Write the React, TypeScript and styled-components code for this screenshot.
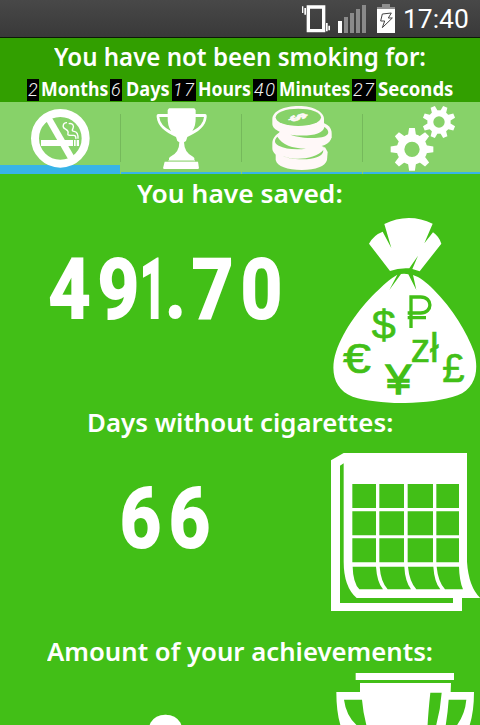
import React, { useLayoutEffect, useRef, useState } from 'react';
import styled, { createGlobalStyle } from 'styled-components';

const GREEN = '#42bf17';
const TAB_GREEN = '#87d269';

const GlobalStyle = createGlobalStyle`
  *, *::before, *::after { box-sizing: border-box; }
  body { margin: 0; overflow: hidden; background: ${GREEN}; }
`;

const Screen = styled.main`
  display: flex;
  flex-direction: column;
  width: 480px;
  height: 725px;
  overflow: hidden;
  background: ${GREEN};
  color: #fff;
  font-family: 'Noto Sans', 'Open Sans', sans-serif;
`;

const StatusBar = styled.div`
  flex: none;
  display: flex;
  justify-content: flex-end;
  height: 38px;
  padding-right: 11px;
  background: linear-gradient(#484848, #393939);
  border-bottom: 1px solid #0c1808;
`;

const StatusIcons = styled.svg`
  flex: none;
  width: 100px;
  height: 37px;
  margin-right: 3px;
`;

const Clock = styled.div`
  font: 400 26px/39px Roboto, sans-serif;
`;

const Header = styled.header`
  flex: none;
  height: 64px;
  background: #329f00;
`;

const Title = styled.h1`
  display: flex;
  justify-content: center;
  height: 36px;
  margin: 0;
  font-size: 26px;
  line-height: 37px;
  font-weight: 650;
`;

const Counter = styled.div`
  display: flex;
  padding: 5px 0 0 27px;
  height: 28px;
`;

const Led = styled.span<{ $digits: number }>`
  flex: none;
  width: ${p => p.$digits * 12}px;
  height: 22px;
  background: #000;
  color: #f4f4f4;
  font: italic 300 18px/22px Roboto, sans-serif;
  letter-spacing: 1.6px;
  padding-left: 1px;
`;

const Unit = styled.span<{ $before: number; $after: number }>`
  margin: 0 ${p => p.$after}px 0 ${p => p.$before}px;
  font-size: 19px;
  line-height: 20px;
  font-weight: 700;
`;

const Tabs = styled.nav`
  flex: none;
  display: flex;
  height: 72px;
  background: ${TAB_GREEN};
`;

const Tab = styled.div<{ $active?: boolean }>`
  flex: 0 0 120px;
  height: 72px;
  box-shadow: inset 0 ${p => (p.$active ? -9 : -2)}px #38b4e8;
`;

const TabIcon = styled.svg`
  display: block;
  width: 120px;
  height: 72px;
`;

const Divider = styled.i`
  flex: none;
  width: 1px;
  height: 48px;
  margin-top: 12px;
  background: #75b95b;
`;

const Section = styled.section`
  flex: none;
  height: 229px;
`;

const Heading = styled.h2`
  display: flex;
  justify-content: center;
  height: 36px;
  margin: 0;
  padding-top: 1px;
  font-size: 26px;
  line-height: 36px;
  font-weight: 650;
`;

const Row = styled.div`
  display: flex;
`;

const Value = styled.div`
  flex: 1;
  display: flex;
  justify-content: center;
  padding: 38px 0 0 5px;
  font: 700 83px/84px Roboto, sans-serif;
  -webkit-text-stroke: 2px #fff;
`;

const Digit = styled.span<{ $cell: number; $squeeze: number }>`
  display: flex;
  justify-content: center;
  width: ${p => p.$cell}px;
  transform: scaleX(${p => p.$squeeze});
`;

const Picture = styled.svg`
  flex: none;
  width: 155px;
  height: 193px;
`;

const FitBox = styled.span`
  display: inline-block;
  flex: none;
  white-space: nowrap;
`;

const FitInner = styled.span`
  display: inline-block;
  transform-origin: 0 50%;
`;

/** Stretches one line of text horizontally to the given width. */
function Fit({ width, children }: { width: number; children: string }) {
  const ref = useRef<HTMLSpanElement>(null);
  const [scale, setScale] = useState(1);
  useLayoutEffect(() => {
    if (ref.current) setScale(width / ref.current.offsetWidth);
  }, [width, children]);
  return (
    <FitBox style={{ width }}>
      <FitInner ref={ref} style={{ transform: `scaleX(${scale})` }}>{children}</FitInner>
    </FitBox>
  );
}

const CELLS: Record<string, [number, number]> = {
  '1': [20, 0.56],
  '.': [25, 0.85],
};

function BigNumber({ text }: { text: string }) {
  return (
    <Value>
      {text.split('').map((c, i) => {
        const [cell, squeeze] = CELLS[c] || [49, 0.87];
        return <Digit key={i} $cell={cell} $squeeze={squeeze}>{c}</Digit>;
      })}
    </Value>
  );
}

const UNITS = [
  { value: '2', name: 'Months', before: 2, width: 67, after: 2 },
  { value: '6', name: 'Days', before: 4, width: 44, after: 2 },
  { value: '17', name: 'Hours', before: 2, width: 53, after: 2 },
  { value: '40', name: 'Minutes', before: 2, width: 71, after: 2 },
  { value: '27', name: 'Seconds', before: 2, width: 75, after: 0 },
];

function SystemIcons() {
  return (
    <StatusIcons viewBox="30 0 300 111">
      <path d="M50 16h56v81H50zM60 26v61h36V26z" fill="#fff" fillRule="evenodd" />
      <path d="M36 19h4v20h-4zM43 24h5v20h-5zM108 69h5v25h-5zM115 77h5v14h-5z" fill="#fff" />
      <path d="M144 63h12v36h-12z" fill="#fff" />
      <path d="M162 51h12v48h-12zM180 39h12v60h-12zM198 27h12v72h-12zM216 15h12v84h-12z" fill="#8a8a8a" />
      <path d="M276 12h24v9h15v6h-54v-6h15z" fill="#8f8f8f" />
      <path d="M261 27h54v72h-54z" fill="#fff" />
      <path d="M277 42l27-3-9 15h12l-30 29 7-20h-12z" fill="#fff" stroke="#444" strokeWidth="3" />
    </StatusIcons>
  );
}

function NoSmokingIcon() {
  return (
    <TabIcon viewBox="0 6 360 216">
      <circle cx="181" cy="115" r="76" fill="none" stroke="#fff" strokeWidth="24" />
      <path d="M123 120h96v18h-96zM222 120h5v18h-5zM230 120h7v18h-7z" fill="#fff" />
      <path d="M146 56l68 118" stroke="#fff" strokeWidth="20" />
      <path d="M201 68c-12-1-15 13-7 18s13 6 10 14 8 6 17 6 6 8 7 11M206 71c14-3 16 8 13 14s-4 8 3 9 13 4 12 22" fill="none" stroke="#fff" strokeWidth="4" />
    </TabIcon>
  );
}

function TrophyIcon() {
  return (
    <TabIcon viewBox="363 6 360 216">
      <path d="M507 25h76l4 5v12h28q6 0 5 9c-2 28-25 45-58 60l-4 12-6 4q1 32 27 43l4 4v6h-76v-6l4-4q27-11 27-43l-6-4-4-12c-34-15-55-33-58-60q-1-9 5-9h28V30zM503 51h-25q2 26 35 42-11-16-10-42zM587 51q1 27-10 42 33-16 35-42z" fill="#fff" fillRule="evenodd" />
      <path d="M494 185h100l3 20-3 2h-102l-3-2z" fill="#fff" />
      <path d="M505 182h80" stroke="#fff" strokeWidth="4" opacity=".55" />
    </TabIcon>
  );
}

function CoinsIcon() {
  return (
    <TabIcon viewBox="6 6 360 216">
      <g fill="#fff8f8">
        <path d="M107 158v22c4 19 35 30 78 30s71-11 76-30l2-24-8-14z" />
        <path d="M97 131c0-16 9-27 24-36l130 45c3 22-22 41-66 42-55 2-88-16-88-37z" />
        <path d="M244 67c19 6 31 16 31 33v12c-4 20-30 31-65 31-40 0-73-11-88-31l-4-17z" />
        <path d="M97 57c0-23 35-39 79-39 45 0 76 18 76 39v14c0 20-35 34-77 34-45 0-78-15-78-34z" />
      </g>
      <g fill={TAB_GREEN}>
        <ellipse cx="175" cy="52" rx="68" ry="26" />
        <path d="M253 81c20 13 17 32-28 33-30 0-56-3-74-10 50 7 99 1 102-23z" />
        <path d="M112 110c-10 10-10 20 4 27 20 10 50 13 82 9-42-1-71-12-86-36z" />
        <path d="M123 164c29 20 104 15 127-14 1 19-27 28-62 28-29 0-54-5-65-14z" />
      </g>
      <text
        transform="translate(175 52) matrix(0.25 0.52 -1.15 0.3 0 0)"
        y="20"
        textAnchor="middle"
        fontFamily="'Liberation Sans', sans-serif"
        fontWeight="700"
        fontSize="58"
        fill="#fff8f8"
        stroke="#fff8f8"
        strokeWidth="3"
      >
        $
      </text>
    </TabIcon>
  );
}

function Gear({ cx, cy, r, hole, tooth, turn }: { cx: number; cy: number; r: number; hole: number; tooth: number; turn: number }) {
  const body = (r + hole) / 2;
  return (
    <g transform={`translate(${cx} ${cy}) rotate(${turn})`} fill="#fff">
      <circle r={body} fill="none" stroke="#fff" strokeWidth={r - hole} />
      {[0, 45, 90, 135, 180, 225, 270, 315].map(a => (
        <path key={a} transform={`rotate(${a})`} d={`M${-tooth} ${-r + 4}L${-tooth * 0.72} ${-r - tooth * 1.5}H${tooth * 0.72}L${tooth} ${-r + 4}z`} />
      ))}
    </g>
  );
}

function GearsIcon() {
  return (
    <TabIcon viewBox="369 6 360 216">
      <Gear cx={516} cy={148} r={46} hole={23} tooth={12} turn={0} />
      <Gear cx={597} cy={66} r={35} hole={17} tooth={9.5} turn={22.5} />
    </TabIcon>
  );
}

function MoneyBag() {
  return (
    <Picture viewBox="0 0 465 579">
      <g fill="#fff">
        <path d="M178 42c46-24 99-24 145-1l-25 59 26-33q18 12 25 34l-65 83-22-7 17-40-26 38q-32-2-58 8l-63-82q14-26 41-36l26 49z" />
        <path d="M217 194l-24 46 35-48q12-2 22 1l24 47-10-45c20 6 40 22 60 42 61 61 100 128 123 188 16 55 5 110-49 131-82 30-233 30-315 4-54-20-69-74-50-134 23-68 76-139 128-187q28-29 56-45z" />
      </g>
      <g fill={GREEN} stroke={GREEN} strokeWidth="2" fontFamily="'Liberation Sans', sans-serif">
        <text x="140" y="387" fontSize="122" textLength="72" lengthAdjust="spacingAndGlyphs">$</text>
        <text x="54" y="490" fontSize="128" textLength="84" lengthAdjust="spacingAndGlyphs">€</text>
        <text x="257" y="455" fontSize="121" textLength="84" lengthAdjust="spacingAndGlyphs">zł</text>
        <text x="182" y="552" fontSize="130" textLength="76" lengthAdjust="spacingAndGlyphs" strokeWidth="4">¥</text>
        <text x="352" y="515" fontSize="124" textLength="67" lengthAdjust="spacingAndGlyphs">£</text>
      </g>
      <path d="M258 354v-93h29c37 0 37 48 0 48h-39M248 323h55" fill="none" stroke={GREEN} strokeWidth="10" />
    </Picture>
  );
}

function Calendar() {
  return (
    <Picture viewBox="0 -18 465 579">
      <path d="M18 46l38-22h370v326q5 76 40 109h-55v39H18zM45 62v412h339v-15H95q-39-34-39-109V55z" fill="#fff" fillRule="evenodd" />
      <g fill={GREEN}>
        {[117, 199, 280].map(y => (
          <path key={y} d={`M82 ${y}h71v72H82zM163 ${y}h74v72h-74zM248 ${y}h76v72h-76zM334 ${y}h68v72h-68z`} />
        ))}
        <path d="M83 365h70q3 47 21 68h-71q-19-20-20-68zM164 365h74q2 43 20 68h-70q-21-24-24-68zM249 365h76q3 47 21 68h-72q-21-24-25-68zM335 365h67q1 42 12 68h-54q-21-24-25-68z" />
      </g>
    </Picture>
  );
}

function AchievementCup() {
  return (
    <Picture viewBox="255 114 465 579">
      <path d="M347 129h295v21H347zM360 159h273l-1 27h70c0 120-42 190-133 216l-36 70h-78l-36-70c-91-26-130-96-130-216h71z" fill="#fff" />
      <path d="M312 209h54q4 50 20 100-65-30-74-100zM626 209h53q-6 70-70 120 13-60 17-120zM571 188h34q-6 90-43 170-3-60 9-170z" fill={GREEN} />
    </Picture>
  );
}

export default function App() {
  return (
    <>
      <GlobalStyle />
      <Screen>
        <StatusBar>
          <SystemIcons />
          <Clock><Fit width={66}>17:40</Fit></Clock>
        </StatusBar>
        <Header>
          <Title><Fit width={372}>You have not been smoking for:</Fit></Title>
          <Counter>
            {UNITS.map(u => (
              <React.Fragment key={u.name}>
                <Led $digits={u.value.length}>{u.value}</Led>
                <Unit $before={u.before} $after={u.after}><Fit width={u.width}>{u.name}</Fit></Unit>
              </React.Fragment>
            ))}
          </Counter>
        </Header>
        <Tabs>
          <Tab $active><NoSmokingIcon /></Tab>
          <Divider />
          <Tab><TrophyIcon /></Tab>
          <Divider />
          <Tab><CoinsIcon /></Tab>
          <Divider />
          <Tab><GearsIcon /></Tab>
        </Tabs>
        <Section>
          <Heading><Fit width={206}>You have saved:</Fit></Heading>
          <Row><BigNumber text="491.70" /><MoneyBag /></Row>
        </Section>
        <Section>
          <Heading><Fit width={306}>Days without cigarettes:</Fit></Heading>
          <Row><BigNumber text="66" /><Calendar /></Row>
        </Section>
        <Section>
          <Heading><Fit width={386}>Amount of your achievements:</Fit></Heading>
          <Row><BigNumber text="8" /><AchievementCup /></Row>
        </Section>
      </Screen>
    </>
  );
}
